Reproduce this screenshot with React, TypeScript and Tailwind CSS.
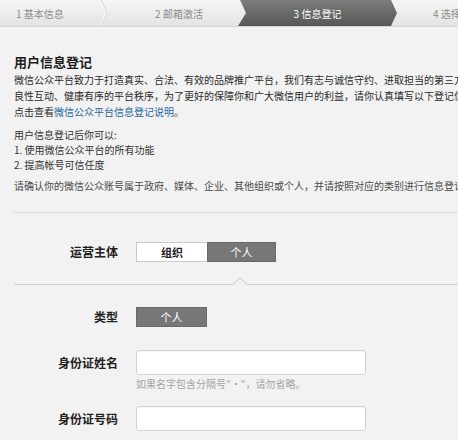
import React from "react";

const font = { fontFamily: '"Noto Sans CJK SC", "Noto Sans", sans-serif' };

function Chevron() {
  return (
    <svg width="8" height="26" viewBox="0 0 8 26" className="shrink-0">
      <polyline points="1,0 7,13 1,26" fill="none" stroke="#cfcfcf" strokeWidth="1" />
      <polyline points="0,0 6,13 0,26" fill="none" stroke="#ffffff" strokeWidth="1" />
    </svg>
  );
}

function Steps() {
  return (
    <div className="flex h-[27px] border-b border-[#d6d6d6] bg-gradient-to-b from-[#f6f6f6] to-[#e3e3e3] text-[10px] text-[#8c8c8c] whitespace-nowrap overflow-hidden">
      <div className="w-[100px] shrink-0 pl-4 flex items-center">1 基本信息</div>
      <Chevron />
      <div className="w-[130px] shrink-0 pl-3 flex items-center justify-center">2 邮箱激活</div>
      <div className="w-[159px] shrink-0 flex items-center justify-center text-white bg-gradient-to-b from-[#7c7c7c] to-[#585858] [clip-path:polygon(2px_0,153px_0,159px_50%,153px_100%,0_100%,8px_50%)]">
        3 信息登记
      </div>
      <div className="pl-[36px] flex items-center">4 选择类型</div>
    </div>
  );
}

function Label({ children }: { children: React.ReactNode }) {
  return (
    <div className="w-[104px] shrink-0 text-right text-[12px] font-bold text-[#222] leading-[16px]">
      {children}
    </div>
  );
}

export default function App() {
  return (
    <div className="w-[458px] h-[440px] overflow-hidden bg-[#f2f2f2]" style={font}>
      <Steps />

      <div className="pl-[14px]">
        <h1 className="mt-[27px] text-[13px] font-bold leading-[16px] text-[#1e1e1e]">用户信息登记</h1>
        <div className="mt-[2px] text-[10px] leading-[16px] text-[#2a2a2a] whitespace-nowrap">
          <p>微信公众平台致力于打造真实、合法、有效的品牌推广平台，我们有志与诚信守约、进取担当的第三方合作者共同构建</p>
          <p>良性互动、健康有序的平台秩序，为了更好的保障你和广大微信用户的利益，请你认真填写以下登记信息。</p>
          <p>
            点击查看<a href="#" className="text-[#24679c]">微信公众平台信息登记说明</a>。
          </p>
        </div>

        <div className="mt-[7px] text-[10px] leading-[15px] text-[#333] whitespace-nowrap">
          <p>用户信息登记后你可以:</p>
          <p>1. 使用微信公众平台的所有功能</p>
          <p>2. 提高帐号可信任度</p>
        </div>

        <p className="mt-[6px] text-[10px] leading-[15px] text-[#4a4a4a] whitespace-nowrap">
          请确认你的微信公众账号属于政府、媒体、企业、其他组织或个人，并请按照对应的类别进行信息登记。
        </p>

        <div className="mt-[19px] h-px bg-[#dadada]" />

        {/* 运营主体 */}
        <div className="mt-[29px] flex items-center gap-[18px]">
          <Label>运营主体</Label>
          <div className="flex h-[20px] text-[11px]">
            <button className="w-[71px] border border-[#c9c9c9] border-r-0 bg-white text-[#222] font-bold">组织</button>
            <button className="w-[69px] border border-[#6a6a6a] bg-[#777] text-white">个人</button>
          </div>
        </div>

        <div className="relative mt-[22px] h-px bg-[#d4d4d4]">
          <div className="absolute left-[221px] -top-[5px] w-[10px] h-[10px] rotate-45 border-l border-t border-[#d4d4d4] bg-[#f2f2f2]" />
        </div>

        {/* 类型 */}
        <div className="mt-[22px] flex items-center gap-[18px]">
          <Label>类型</Label>
          <div className="flex h-[20px] w-[71px] items-center justify-center border border-[#6a6a6a] bg-[#777] text-[11px] text-white">
            个人
          </div>
        </div>

        {/* 身份证姓名 */}
        <div className="mt-[23px] flex items-center gap-[18px]">
          <Label>身份证姓名</Label>
          <input className="h-[25px] w-[230px] rounded-[3px] border border-[#d3d3d3] bg-white px-2 text-[11px] outline-none shadow-[inset_0_1px_1px_rgba(0,0,0,0.04)]" />
        </div>
        <p className="mt-[2px] pl-[122px] text-[10px] leading-[14px] text-[#a3a3a3] whitespace-nowrap">
          如果名字包含分隔号"·"，请勿省略。
        </p>

        {/* 身份证号码 */}
        <div className="mt-[15px] flex items-center gap-[18px]">
          <Label>身份证号码</Label>
          <input className="h-[25px] w-[230px] rounded-[3px] border border-[#d3d3d3] bg-white px-2 text-[11px] outline-none shadow-[inset_0_1px_1px_rgba(0,0,0,0.04)]" />
        </div>
      </div>
    </div>
  );
}
